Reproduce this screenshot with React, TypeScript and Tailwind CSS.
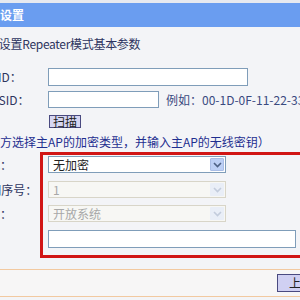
import { ReactNode } from 'react';

function Label({ children, className = '' }: { children: ReactNode; className?: string }) {
  return (
    <span className={`w-[96px] shrink-0 overflow-hidden whitespace-nowrap text-[12px] leading-[16px] text-[#2e3560] ${className}`}>
      {children}
    </span>
  );
}

function Chevron({ disabled }: { disabled?: boolean }) {
  return (
    <svg width="9" height="6" viewBox="0 0 9 6">
      <path
        d="M1 1 L4.5 4.5 L8 1"
        fill="none"
        stroke={disabled ? '#c3ccdc' : '#4d6185'}
        strokeWidth="1.6"
      />
    </svg>
  );
}

function FakeSelect({
  value,
  disabled,
  className,
}: {
  value: string;
  disabled?: boolean;
  className: string;
}) {
  return (
    <div
      className={`flex w-[178px] items-stretch border ${
        disabled ? 'border-[#d8d5c8] bg-[#f7f7f4] text-[#a8a8a8]' : 'border-[#7f9db9] bg-white text-[#222]'
      } ${className}`}
    >
      <span className="flex flex-1 items-center pl-[4px] text-[12px] leading-[15px]">{value}</span>
      <span
        className={`m-[1px] flex w-[14px] items-center justify-center rounded-[1px] ${
          disabled ? 'bg-[#e9eef7]' : 'border border-[#a9bde6] bg-[#bccff5]'
        }`}
      >
        <Chevron disabled={disabled} />
      </span>
    </div>
  );
}

export default function App() {
  return (
    <div className="relative h-[300px] w-[300px] overflow-hidden bg-[#f3f4f7] font-['Noto_Sans_CJK_SC',sans-serif]">
      <div className="h-[3px] bg-[#e6e9f0]" />
      <div className="flex h-[24px] items-center bg-[#6a9df0]">
        <span className="ml-[-24px] whitespace-nowrap text-[12px] font-bold text-white">无线设置</span>
      </div>

      <div className="ml-[-48px] flex w-[400px] flex-col">
        <p className="mt-[9px] h-[16px] whitespace-nowrap text-[12px] leading-[16px] tracking-[-0.3px] text-[#2e3560]">
          本页面中设置Repeater模式基本参数
        </p>

        <div className="mt-[16px] flex h-[18px] items-center">
          <Label className="indent-[-7px]">主AP的SSID：</Label>
          <div className="h-[18px] w-[200px] border border-[#7f9db9] bg-white" />
        </div>

        <div className="mt-[5px] flex h-[17px] items-center">
          <Label className="indent-[-7px]">主AP的BSSID：</Label>
          <div className="h-[17px] w-[111px] border border-[#7f9db9] bg-white" />
          <span className="ml-[7px] whitespace-nowrap text-[12px] text-[#3a4a80]">例如：00-1D-0F-11-22-33</span>
        </div>

        <div className="mt-[7px] flex h-[13px] items-center">
          <span className="w-[97px] shrink-0" />
          <button className="flex h-[13px] w-[32px] items-center justify-center border border-[#4a4a80] bg-[#d6d6f2] text-[12px] leading-[12px] text-[#222]">
            扫描
          </button>
        </div>

        <p className="mt-[6px] h-[16px] whitespace-nowrap text-[12px] leading-[16px] text-[#1f2f90]">
          （请在下方选择主AP的加密类型，并输入主AP的无线密钥）
        </p>

        <div className="mt-[6px] flex h-[17px] items-center">
          <Label>加密方式：</Label>
          <FakeSelect value="无加密" className="h-[17px]" />
        </div>

        <div className="mt-[8px] flex h-[17px] items-center">
          <Label>WEP密钥序号：</Label>
          <FakeSelect value="1" disabled className="h-[17px]" />
        </div>

        <div className="mt-[7px] flex h-[17px] items-center">
          <Label>认证类型：</Label>
          <FakeSelect value="开放系统" disabled className="h-[17px]" />
        </div>

        <div className="mt-[8px] flex h-[18px] items-center">
          <Label>密钥：</Label>
          <div className="h-[18px] w-[248px] border border-[#7f9db9] bg-white" />
        </div>

        <div className="mt-[21px] flex h-[28px] items-center border-y border-[#f2c9a0] bg-[#f7f6f6]">
          <span className="w-[325px] shrink-0" />
          <button className="flex h-[18px] w-[60px] shrink-0 items-center justify-center border border-[#4a4a80] bg-[#d0d0f2] text-[12px] text-[#222]">
            上一步
          </button>
        </div>
      </div>

      <div className="absolute left-[40px] right-[-30px] top-[152px] h-[106px] border-[3px] border-r-0 border-[#d11515]" />
    </div>
  );
}
